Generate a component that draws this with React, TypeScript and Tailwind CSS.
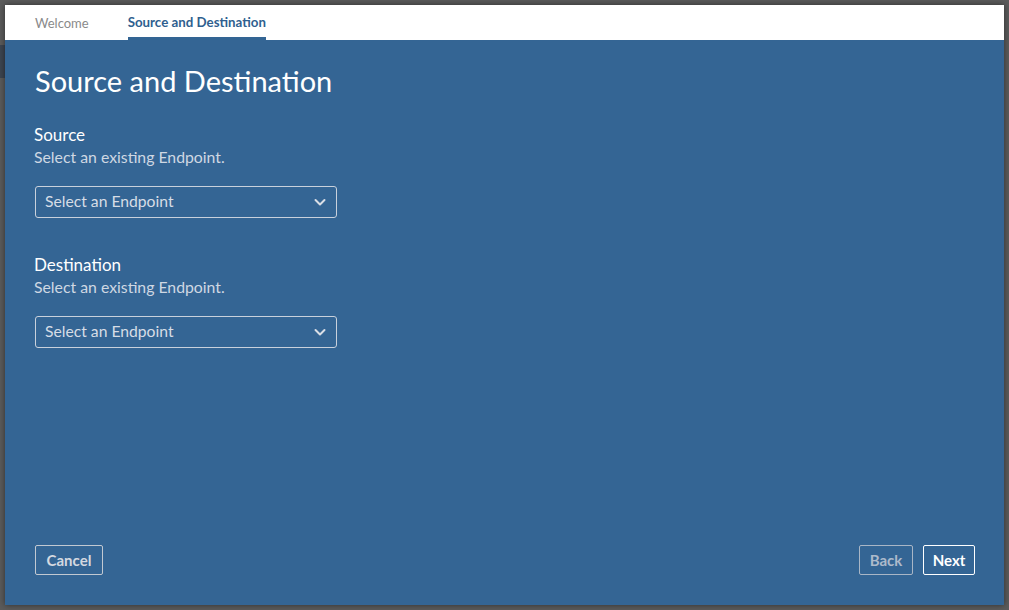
import React from "react";

function Chevron() {
  return (
    <svg width="14" height="14" viewBox="0 0 14 14" fill="none">
      <path d="M2.5 5 L7 9.5 L11.5 5" stroke="#d9dee6" strokeWidth="2" strokeLinecap="round" strokeLinejoin="round" />
    </svg>
  );
}

function Field({ label }: { label: string }) {
  return (
    <div className="flex flex-col">
      <div className="text-[17px] leading-[22px] text-white -ml-[1px]">{label}</div>
      <div className="text-[15.8px] leading-[20px] text-[#cfd8e3] mt-[1px] -ml-[1px]">Select an existing Endpoint.</div>
      <div className="mt-[19px] w-[302px] h-[32px] border border-[#c9d1dc] rounded-[3px] flex items-center justify-between pl-[9px] pr-[9px]">
        <span className="text-[15.7px] text-[#d7dde6]">Select an Endpoint</span>
        <Chevron />
      </div>
    </div>
  );
}

export default function App() {
  return (
    <div
      className="w-[1009px] h-[610px] bg-[#5b5b5b] p-[5px] overflow-hidden relative"
      style={{ fontFamily: "Lato, 'Open Sans', sans-serif" }}
    >
      <div className="absolute left-0 top-[45px] w-[5px] h-[33px] bg-[#3d4550]" />
      <div className="w-full h-full flex flex-col shadow-[0_0_6px_rgba(0,0,0,0.5)] relative">
        <div className="h-[35px] bg-white flex items-end pl-[30px] gap-[39px]">
          <div className="h-full flex items-center pt-[3px] text-[13px] text-[#8a8a8a]">Welcome</div>
          <div className="h-full flex items-center pt-[4px] border-b-[3px] border-[#336594] text-[13.3px] font-bold text-[#2f5f8f]">
            Source and Destination
          </div>
        </div>
        <div className="flex-1 bg-[#346594] flex flex-col px-[30px]">
          <h1 className="text-[29px] leading-[34px] text-white mt-[24px]">Source and Destination</h1>
          <div className="mt-[26px]">
            <Field label="Source" />
          </div>
          <div className="mt-[36px]">
            <Field label="Destination" />
          </div>
          <div className="flex-1" />
          <div className="flex items-center justify-between mb-[30px] mr-[-1px]">
            <button className="h-[30px] w-[68px] border border-[#c2c9d2] rounded-[2px] text-[15px] font-bold text-[#d4d9e0]">
              Cancel
            </button>
            <div className="flex gap-[10px]">
              <button className="h-[30px] w-[54px] border border-[#a9b6c6] rounded-[2px] text-[15px] font-bold text-[#adbacb]">
                Back
              </button>
              <button className="h-[30px] w-[52px] border border-white rounded-[2px] text-[15px] font-bold text-white">
                Next
              </button>
            </div>
          </div>
        </div>
      </div>
    </div>
  );
}
